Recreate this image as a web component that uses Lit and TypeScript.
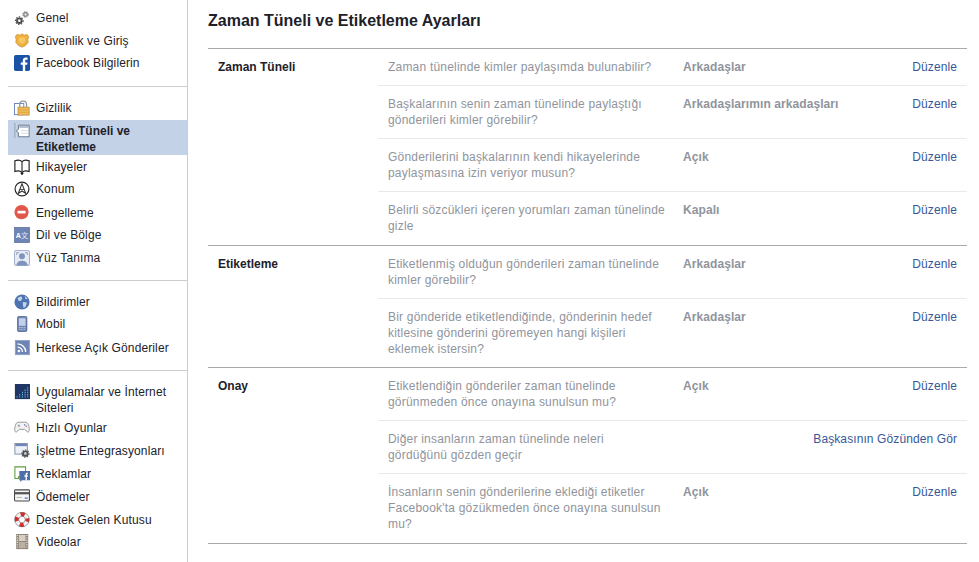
import { LitElement, html, css, svg } from "lit";
import { customElement } from "lit/decorators.js";

const icons: Record<string, unknown> = {
  gear: svg`<circle cx="6" cy="12" r="2.600" fill="none" stroke="#4b4b4b" stroke-width="2.200"/><circle cx="6" cy="12" r="4.300" fill="none" stroke="#4b4b4b" stroke-width="1.200" stroke-dasharray="1.600 1.600"/><circle cx="13" cy="5" r="2" fill="none" stroke="#8f8f8f" stroke-width="1.800"/><circle cx="13" cy="5" r="3.400" fill="none" stroke="#8f8f8f" stroke-width="1" stroke-dasharray="1.400 1.400"/>`,
  badge: svg`<path d="M3.500 1.500 6 2.500 9 1 12 2.500 14.500 1.500 16.500 4 15.500 7.500 16 10.500 13 14 9 16 5 14 2 10.500 2.500 7.500 1.500 4Z" fill="#f0b03f" stroke="#c98f2e" stroke-width=".8"/><path d="M5.500 5h7v5l-3.500 2.500L5.500 10Z" fill="#f6c766"/>`,
  fb: svg`<rect x="0" y="0" width="18" height="18" rx="2" fill="#1a53a6"/><path d="M12.600 18v-7h2.300l.3-2.700h-2.600V6.700c0-.8.2-1.300 1.300-1.300h1.400V3c-.3 0-1.100-.1-2-.1-2 0-3.400 1.200-3.400 3.500v1.900H7.600V11h2.300v7Z" fill="#fff"/>`,
  lock: svg`<rect x=".5" y="4" width="10.500" height="12.500" fill="#fff" stroke="#5b7db8"/><path d="M6.500 8V5a3.800 3.800 0 0 1 7.600 0v3" fill="none" stroke="#9a9a9a" stroke-width="1.500"/><rect x="4.500" y="8" width="12.500" height="9" fill="#f1bd5c" stroke="#a9853f" stroke-width=".8"/><path d="M5 11h11.500M5 13.800h11.500" stroke="#d69c39" stroke-width=".8"/>`,
  timeline: svg`<path d="M1 0v17" stroke="#8b9cb8"/><path d="M2.500 9 5 7V2.500h12v13H5V11Z" fill="#fff" stroke="#5d6b80"/><path d="M6 4.500h10.500" stroke="#aeb9cb" stroke-width="2"/><path d="M8 8.500h8M8 11.500h8" stroke="#cdd5e2"/>`,
  book: svg`<path d="M9 3C7.500 1.500 4 1 1 2v12c3-1 6.500-.5 8 1 1.500-1.500 5-2 8-1V2c-3-1-6.500-.5-8 1Z" fill="#fff" stroke="#222" stroke-width="1.300"/><path d="M9 3v14M7.500 15.500 9 17.500l1.500-2" fill="none" stroke="#222" stroke-width="1.200"/>`,
  compass: svg`<circle cx="9" cy="9" r="7.800" fill="#fff" stroke="#222" stroke-width="1.300"/><path d="M9 3 4.800 14l4.200-2.800 4.200 2.800Z" fill="none" stroke="#333" stroke-width="1.200"/><path d="M6.800 9.500h4.400" stroke="#333"/>`,
  block: svg`<circle cx="8.500" cy="8" r="8" fill="#e0584a"/><rect x="4" y="6.500" width="9" height="3" fill="#fff"/>`,
  lang: svg`<rect x=".5" y=".5" width="17" height="17" fill="#6d84b4" stroke="#5a6f9e" stroke-width=".8"/><text x="2" y="12.500" font-family="Liberation Sans" font-size="8" font-weight="700" fill="#fff">A</text><text x="8" y="12" font-family="Noto Sans CJK SC" font-size="8" fill="#e4e9f4">文</text>`,
  face: svg`<rect x=".5" y=".5" width="17" height="17" rx="2" fill="#e6ebf4" stroke="#93a3c4"/><circle cx="9" cy="7" r="3.300" fill="#7e94bd"/><path d="M2.500 17.500c.5-4 3.500-5.500 6.500-5.500s6 1.500 6.500 5.500Z" fill="#7e94bd"/><path d="M3 5.500V3h2.500M12.500 3H15v2.500" fill="none" stroke="#8396bd"/>`,
  globe: svg`<circle cx="9" cy="9" r="8.500" fill="#4e73b3"/><path d="M4 4.500 8 2.500l1.500 2.500L7.500 8 5 7.500ZM10 9l4.500.5-1 4-2.500 2.500-1-3.500ZM12 2l3.500 3.500-2.500.5Z" fill="#c6d3e8"/>`,
  phone: svg`<rect x="4" y=".5" width="10.500" height="17" rx="1.500" fill="#6d84b4" stroke="#3f5789" stroke-width=".8"/><rect x="5.500" y="2.500" width="7.500" height="8.500" fill="#c4d0e6"/><path d="M5.500 13h7.500M5.500 15h7.500" stroke="#dfe5f0" stroke-dasharray="1 1"/>`,
  rss: svg`<rect x="1.500" y=".5" width="16" height="16" fill="#6d84b4" stroke="#8fa2c8"/><circle cx="5.500" cy="12.500" r="1.500" fill="#fff"/><path d="M4 8a5.500 5.500 0 0 1 5.500 5.500M4 4.300a9.200 9.200 0 0 1 9.200 9.200" fill="none" stroke="#fff" stroke-width="1.500"/>`,
  apps: svg`<rect x="1" y="0" width="17" height="17" fill="#1f3563"/><path d="M3 14.500h1M6 14.500h1M9 14.500h1M12 14.500h1M15 14.500h1M6 12h1M9 12h1M12 12h1M15 12h1M9 9.500h1M12 9.500h1M15 9.500h1M12 7h1M15 7h1M15 4.500h1" stroke="#6fc3e8" stroke-width="1.600"/>`,
  game: svg`<path d="M5 2.500h8c2.500 0 3.500 3 4 6 .4 2.500.2 4.500-1 5-1.500.5-3-2.500-4-3H6c-1 .5-2.500 3.500-4 3-1.200-.5-1.400-2.500-1-5 .5-3 1.500-6 4-6Z" fill="#f2f2f2" stroke="#8d8d8d"/><path d="M4 6.500h3M5.500 5v3" stroke="#9a9a9a"/><circle cx="12" cy="5.500" r=".9" fill="#5f8fd6"/><circle cx="13.800" cy="7" r=".9" fill="#d8665a"/>`,
  biz: svg`<rect x="1" y=".5" width="14" height="12" fill="#eef1f7" stroke="#7d8ba6"/><rect x="1.500" y="1" width="13" height="2.500" fill="#6d84b4"/><circle cx="12.800" cy="12" r="2.600" fill="none" stroke="#4f4f4f" stroke-width="2"/><circle cx="12.800" cy="12" r="4" fill="none" stroke="#4f4f4f" stroke-width="1.300" stroke-dasharray="1.500 1.500"/>`,
  ads: svg`<path d="M1 1h12v11H5v2H1Z" fill="#fff" stroke="#5f9e3f" stroke-width="1.200"/><path d="M6 5.500h12V16H9l-2 2V16H6Z" fill="#4f6ea8"/><path d="M13 16v-4h-1.300v-1.600H13V9.200c0-1.200.8-1.800 2.500-1.600v1.500c-.8 0-1 .2-1 .7v.6h1l-.1 1.600h-.9v4Z" fill="#fff"/>`,
  card: svg`<rect x=".6" y="1" width="16.800" height="12.500" rx="1" fill="#f5f5f5" stroke="#4a4a4a" stroke-width="1.200"/><rect x="1" y="3.500" width="16" height="2.500" fill="#555"/><path d="M3 9.500h6" stroke="#aaa"/><rect x="12" y="9.500" width="3.500" height="1.500" fill="#4f7ac7"/>`,
  ring: svg`<circle cx="9" cy="8.500" r="6" fill="none" stroke="#f4f4f4" stroke-width="4.500"/><circle cx="9" cy="8.500" r="6" fill="none" stroke="#d92b2b" stroke-width="4.500" stroke-dasharray="4.700 4.700" stroke-dashoffset="2.300"/><circle cx="9" cy="8.500" r="8.200" fill="none" stroke="#555" stroke-width=".6"/><circle cx="9" cy="8.500" r="3.700" fill="none" stroke="#555" stroke-width=".6"/>`,
  film: svg`<rect x="2.500" y="0" width="13.500" height="17" fill="#8a8074"/><rect x="5.500" y="1" width="7.500" height="7" fill="#d6cfc4"/><rect x="5.500" y="9" width="7.500" height="7" fill="#b9b0a3"/><path d="M4 1v15M14.500 1v15" stroke="#e4e0da" stroke-width="1.500" stroke-dasharray="1.300 1.300"/>`,
};

type Item = { t: string; i: string; h: number; active?: boolean };
const navGroups: Item[][] = [
  [
    { t: "Genel", i: "gear", h: 23 },
    { t: "Güvenlik ve Giriş", i: "badge", h: 22 },
    { t: "Facebook Bilgilerin", i: "fb", h: 23 },
  ],
  [
    { t: "Gizlilik", i: "lock", h: 20 },
    { t: "Zaman Tüneli ve Etiketleme", i: "timeline", h: 35, active: true },
    { t: "Hikayeler", i: "book", h: 22 },
    { t: "Konum", i: "compass", h: 24 },
    { t: "Engelleme", i: "block", h: 22 },
    { t: "Dil ve Bölge", i: "lang", h: 23 },
    { t: "Yüz Tanıma", i: "face", h: 22 },
  ],
  [
    { t: "Bildirimler", i: "globe", h: 22 },
    { t: "Mobil", i: "phone", h: 24 },
    { t: "Herkese Açık Gönderiler", i: "rss", h: 22 },
  ],
  [
    { t: "Uygulamalar ve İnternet Siteleri", i: "apps", h: 36 },
    { t: "Hızlı Oyunlar", i: "game", h: 23 },
    { t: "İşletme Entegrasyonları", i: "biz", h: 23 },
    { t: "Reklamlar", i: "ads", h: 23 },
    { t: "Ödemeler", i: "card", h: 23 },
    { t: "Destek Gelen Kutusu", i: "ring", h: 22 },
    { t: "Videolar", i: "film", h: 22 },
  ],
];

type Row = { q: string; v?: string; a?: string };
const sections: { label: string; rows: Row[] }[] = [
  {
    label: "Zaman Tüneli",
    rows: [
      { q: "Zaman tünelinde kimler paylaşımda bulunabilir?", v: "Arkadaşlar" },
      { q: "Başkalarının senin zaman tünelinde paylaştığı gönderileri kimler görebilir?", v: "Arkadaşlarımın arkadaşları" },
      { q: "Gönderilerini başkalarının kendi hikayelerinde paylaşmasına izin veriyor musun?", v: "Açık" },
      { q: "Belirli sözcükleri içeren yorumları zaman tünelinde gizle", v: "Kapalı" },
    ],
  },
  {
    label: "Etiketleme",
    rows: [
      { q: "Etiketlenmiş olduğun gönderileri zaman tünelinde kimler görebilir?", v: "Arkadaşlar" },
      { q: "Bir gönderide etiketlendiğinde, gönderinin hedef kitlesine gönderini göremeyen hangi kişileri eklemek istersin?", v: "Arkadaşlar" },
    ],
  },
  {
    label: "Onay",
    rows: [
      { q: "Etiketlendiğin gönderiler zaman tünelinde görünmeden önce onayına sunulsun mu?", v: "Açık" },
      { q: "Diğer insanların zaman tünelinde neleri gördüğünü gözden geçir", a: "Başkasının Gözünden Gör" },
      { q: "İnsanların senin gönderilerine eklediği etiketler Facebook'ta gözükmeden önce onayına sunulsun mu?", v: "Açık" },
    ],
  },
];

@customElement("app-root")
export class AppRoot extends LitElement {
  static styles = css`
    :host {
      display: flex;
      width: 979px;
      height: 562px;
      overflow: hidden;
      background: #fff;
      font-family: "Liberation Sans", Arial, sans-serif;
      font-size: 12px;
      line-height: 16px;
      color: #1d2129;
    }
    .side {
      box-sizing: border-box;
      width: 188px;
      height: 562px;
      padding: 10px 0 0 8px;
      border-right: 1px solid #ccc;
      flex: none;
    }
    .group {
      padding-bottom: 8px;
      margin-bottom: 13px;
      border-bottom: 1px solid #ccc;
    }
    .group:last-child {
      border-bottom: 0;
    }
    .item {
      display: flex;
      box-sizing: border-box;
      padding-left: 28px;
      position: relative;
      letter-spacing: 0.12px;
    }
    .item svg {
      position: absolute;
      left: 6px;
      top: 0;
      width: 16px;
      height: 16px;
    }
    .item.active {
      background: #c4d2e7;
      font-weight: 700;
      padding-top: 3px;
      margin-bottom: 4px;
      letter-spacing: 0;
    }
    .item.active svg {
      top: 3px;
    }
    .main {
      flex: 1;
      padding: 0 12px 0 20px;
    }
    h1 {
      margin: 0;
      padding: 11px 0 18px;
      font-size: 16px;
      line-height: 19px;
      font-weight: 700;
      border-bottom: 1px solid #a9a9a9;
    }
    .section {
      display: flex;
      padding-bottom: 1px;
      border-bottom: 1px solid #a9a9a9;
    }
    .section:nth-of-type(2) {
      padding-bottom: 0;
    }
    .label {
      box-sizing: border-box;
      width: 170px;
      padding: 10px 0 0 10px;
      font-weight: 700;
      flex: none;
    }
    .rows {
      flex: 1;
    }
    .row {
      display: grid;
      grid-template-columns: 295px 1fr auto;
      padding: 10px;
      border-bottom: 1px solid #e9e9e9;
      color: #90949c;
    }
    .row:last-child {
      border-bottom: 0;
    }
    .q {
      width: 278px;
      letter-spacing: 0.2px;
    }
    .v {
      font-weight: 700;
      letter-spacing: 0.08px;
    }
    .a {
      color: #365899;
      letter-spacing: 0.1px;
    }
  `;

  render() {
    return html`
      <nav class="side">
        ${navGroups.map(
          (g) => html`<div class="group">
            ${g.map(
              (n) => html`<div class="item ${n.active ? "active" : ""}" style="min-height:${n.h}px">
                <svg viewBox="0 0 18 18">${icons[n.i]}</svg><span>${n.t}</span>
              </div>`
            )}
          </div>`
        )}
      </nav>
      <main class="main">
        <h1>Zaman Tüneli ve Etiketleme Ayarları</h1>
        ${sections.map(
          (s) => html`<section class="section">
            <div class="label">${s.label}</div>
            <div class="rows">
              ${s.rows.map(
                (r) => html`<div class="row">
                  <div class="q">${r.q}</div>
                  <div class="v">${r.v ?? ""}</div>
                  <div class="a">${r.a ?? "Düzenle"}</div>
                </div>`
              )}
            </div>
          </section>`
        )}
      </main>
    `;
  }
}
